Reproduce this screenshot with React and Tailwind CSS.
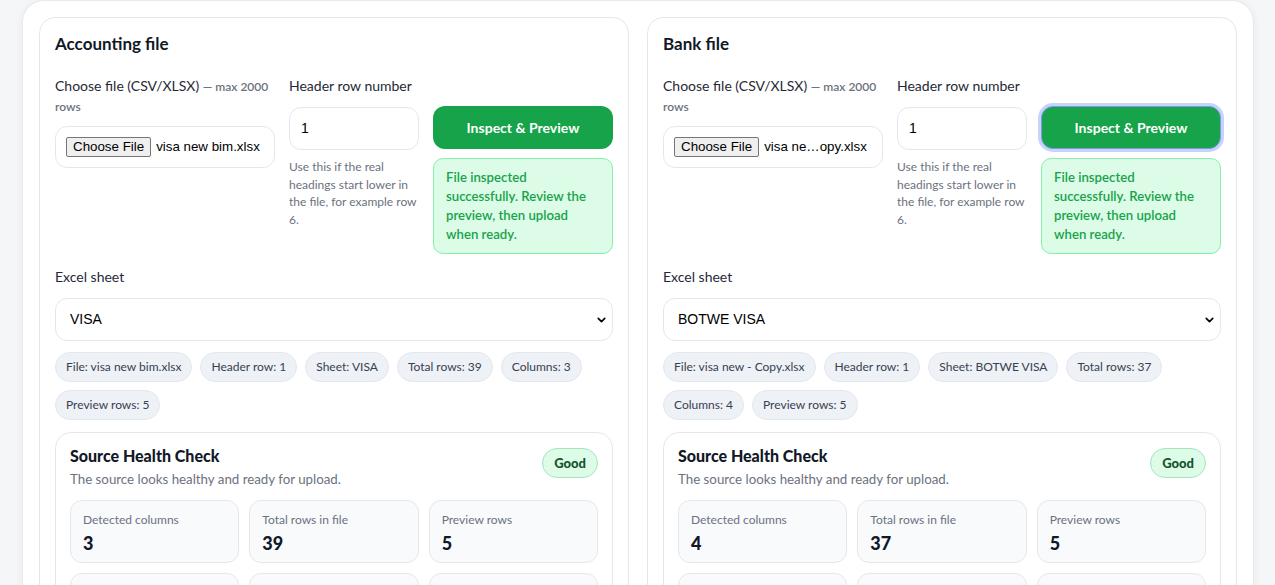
import React from "react";
import { ChevronDown } from "lucide-react";

const Chip = ({ children }) => (
  <span className="rounded-full border border-[#e3e7ee] bg-[#eef1f6] px-[10px] py-[6px] text-[12px] leading-[16px] text-[#374151] whitespace-nowrap">
    {children}
  </span>
);

const Stat = ({ label, value }) => (
  <div className="rounded-xl border border-[#e5e7eb] bg-[#f8fafc] px-3 pt-[11px] pb-[8px]">
    <div className="text-[12px] leading-[16px] text-[#6b7280]">{label}</div>
    <div className="mt-[4px] text-[18px] font-black leading-[22px] text-[#111827]">{value}</div>
  </div>
);

function Panel({ title, fileName, sheet, chips, cols, total, focused }) {
  return (
    <div className="rounded-[16px] border border-[#e5e7eb] bg-white p-[15px]">
      <h2 className="text-[17px] font-bold leading-[22px] text-[#111827]">{title}</h2>

      <div className="mt-[21px] grid grid-cols-[220px_130px_180px] gap-[14px]">
        <div>
          <div className="text-[14px] leading-[19px] text-[#1f2937]">
            Choose file (CSV/XLSX){" "}
            <span className="text-[12px] font-semibold text-[#6b7280]">— max 2000 rows</span>
          </div>
          <div className="mt-[10px] flex h-[42px] items-center rounded-xl border border-[#e5e7eb] bg-white px-[10px] font-['Liberation_Sans',Arial,sans-serif] text-[13.33px] text-black">
            <span className="rounded-[2px] border border-[#767676] bg-[#efefef] px-[6px] py-[1px] leading-[16px] whitespace-nowrap">
              Choose File
            </span>
            <span className="ml-[5px] whitespace-nowrap">{fileName}</span>
          </div>
        </div>

        <div>
          <div className="text-[14px] leading-[19px] text-[#1f2937] whitespace-nowrap">Header row number</div>
          <div className="mt-3 flex h-[43px] items-center rounded-xl border border-[#e5e7eb] bg-white px-[11px] font-['Liberation_Sans',Arial,sans-serif] text-[14px] text-black">
            1
          </div>
          <p className="mt-2 text-[12px] leading-[17.7px] text-[#6b7280] whitespace-nowrap">
            Use this if the real
            <br />
            headings start lower in
            <br />
            the file, for example row
            <br />
            6.
          </p>
        </div>

        <div className="pt-[30px]">
          <button
            className={
              "flex h-[43px] w-full items-center justify-center rounded-xl bg-[#16a34a] text-[14px] font-bold text-white " +
              (focused ? "border border-[#7d97ec] shadow-[0_0_0_3px_#c5d4fb]" : "")
            }
          >
            Inspect &amp; Preview
          </button>
          <div className="mt-[9px] rounded-[10px] border border-[#86efac] bg-[#dcfce7] px-[12px] py-[9px] text-[13.2px] font-semibold leading-[19px] text-[#16a34a] whitespace-nowrap">
            File inspected
            <br />
            successfully. Review the
            <br />
            preview, then upload
            <br />
            when ready.
          </div>
        </div>
      </div>

      <div className="mt-[13px] text-[14px] leading-[19px] text-[#1f2937]">Excel sheet</div>
      <div className="relative mt-3">
        <select
          defaultValue={sheet}
          className="h-[43px] w-full appearance-none rounded-xl border border-[#e5e7eb] bg-white px-[14px] font-['Liberation_Sans',Arial,sans-serif] text-[14px] text-black outline-none"
        >
          <option>{sheet}</option>
        </select>
        <ChevronDown
          size={13}
          strokeWidth={3}
          className="pointer-events-none absolute right-[5px] top-1/2 -translate-y-1/2 text-black"
        />
      </div>

      <div className="mt-[11px] flex flex-wrap gap-x-2 gap-y-2">
        {chips.map((c) => (
          <Chip key={c}>{c}</Chip>
        ))}
      </div>

      <div className="mt-3 rounded-[16px] border border-[#e5e7eb] bg-white p-[14px]">
        <div className="flex items-start justify-between">
          <div>
            <div className="text-[16px] font-black leading-[18px] text-[#111827]">Source Health Check</div>
            <div className="mt-[5px] text-[13.3px] leading-[18px] text-[#6b7280]">
              The source looks healthy and ready for upload.
            </div>
          </div>
          <span className="mt-[1px] rounded-full border border-[#a7e3bd] bg-[#dcfce7] px-[11px] py-[5px] text-[13px] font-black leading-[18px] text-[#14532d]">
            Good
          </span>
        </div>
        <div className="mt-3 grid grid-cols-3 gap-[10px]">
          <Stat label="Detected columns" value={cols} />
          <Stat label="Total rows in file" value={total} />
          <Stat label="Preview rows" value="5" />
          <Stat label="Empty rows" value="0" />
          <Stat label="Duplicate rows" value="0" />
          <Stat label="Issues" value="0" />
        </div>
      </div>
    </div>
  );
}

export default function App() {
  return (
    <div className="min-h-screen bg-[#f5f6f8] pl-[22px] pr-[21px] font-['Lato','Open_Sans',sans-serif]">
      <div className="rounded-[22px] border border-[#e8e9ee] bg-white p-4 shadow-[0_2px_10px_rgba(0,0,0,0.06)]">
        <div className="grid grid-cols-2 gap-[18px]">
          <Panel
            title="Accounting file"
            fileName="visa new bim.xlsx"
            sheet="VISA"
            cols="3"
            total="39"
            chips={[
              "File: visa new bim.xlsx",
              "Header row: 1",
              "Sheet: VISA",
              "Total rows: 39",
              "Columns: 3",
              "Preview rows: 5",
            ]}
          />
          <Panel
            title="Bank file"
            fileName="visa ne…opy.xlsx"
            sheet="BOTWE VISA"
            cols="4"
            total="37"
            focused
            chips={[
              "File: visa new - Copy.xlsx",
              "Header row: 1",
              "Sheet: BOTWE VISA",
              "Total rows: 37",
              "Columns: 4",
              "Preview rows: 5",
            ]}
          />
        </div>
      </div>
    </div>
  );
}
